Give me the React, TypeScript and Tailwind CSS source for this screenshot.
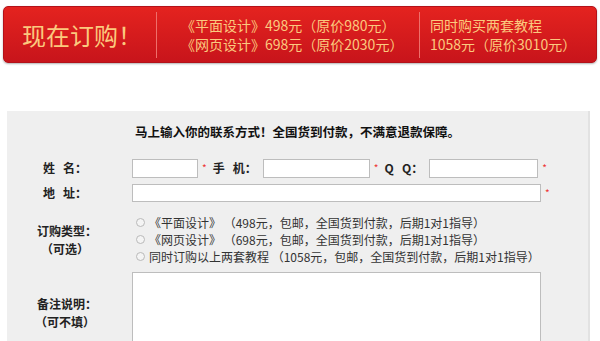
const cjk = { fontFamily: '"Noto Sans CJK SC", "Liberation Sans", sans-serif' };

function Star() {
  return <span className="ml-[4px] text-[10px] leading-none text-[#e33]">*</span>;
}

function Radio() {
  return (
    <span className="mr-[4px] inline-block h-[9px] w-[9px] rounded-full border border-[#b9b9b9] bg-[#f4f4f4]" />
  );
}

export default function App() {
  const options = [
    '《平面设计》 （498元，包邮，全国货到付款，后期1对1指导）',
    '《网页设计》 （698元，包邮，全国货到付款，后期1对1指导）',
    '同时订购以上两套教程 （1058元，包邮，全国货到付款，后期1对1指导）',
  ];

  return (
    <div className="h-[341px] w-[600px] overflow-hidden bg-white" style={cjk}>
      {/* banner */}
      <div className="ml-[3px] mt-[6px] flex h-[57px] w-[594px] items-center rounded-[5px] border border-[#b3121a] bg-gradient-to-b from-[#e4231f] to-[#c8141b] text-[#fbc97e] shadow-[0_1px_2px_rgba(0,0,0,0.3)]">
        <div className="flex h-[46px] w-[153px] items-center border-r border-[#ee6f6a] pl-[18px] text-[24px] leading-none">
          现在订购！
        </div>
        <div className="flex h-[46px] w-[263px] flex-col justify-center border-r border-[#ee6f6a] pl-[24px] text-[14px] leading-[19px]">
          <div>《平面设计》498元（原价980元）</div>
          <div>《网页设计》698元（原价2030元）</div>
        </div>
        <div className="flex flex-col justify-center pl-[10px] text-[14px] leading-[19px]">
          <div>同时购买两套教程</div>
          <div>1058元（原价3010元）</div>
        </div>
      </div>

      {/* form panel */}
      <div className="ml-[7px] mt-[48px] h-[240px] w-[583px] border-r-2 border-[#e2e2e2] bg-[#efefef] text-[12px] text-[#222]">
        <div className="pt-[13px] text-center text-[12.5px] font-bold leading-[16px] text-[#111]">
          马上输入你的联系方式！全国货到付款，不满意退款保障。
        </div>

        <div className="mt-[18px] flex h-[20px] items-center">
          <div className="w-[116px] whitespace-pre text-center font-bold">姓   名：</div>
          <input className="ml-[9px] h-[19px] w-[66px] border border-[#bdbdbd] bg-white" />
          <Star />
          <span className="ml-[6px] whitespace-pre font-bold">手   机：</span>
          <input className="ml-[6px] h-[19px] w-[107px] border border-[#bdbdbd] bg-white" />
          <Star />
          <span className="ml-[6px] whitespace-pre font-bold">Q   Q：</span>
          <input className="ml-[6px] h-[19px] w-[109px] border border-[#bdbdbd] bg-white" />
          <Star />
        </div>

        <div className="mt-[5px] flex h-[19px] items-center">
          <div className="w-[116px] whitespace-pre text-center font-bold">地   址：</div>
          <input className="ml-[9px] h-[18px] w-[409px] border border-[#bdbdbd] bg-white" />
          <Star />
        </div>

        <div className="mt-[12px] flex">
          <div className="flex w-[116px] flex-col items-center justify-center gap-[1px] text-[12px] font-bold leading-[17px]">
            <div className="pl-[4px]">订购类型：</div>
            <div>（可选）</div>
          </div>
          <div className="ml-[13px] flex flex-col text-[12px] leading-[17px] text-[#333]">
            {options.map((o) => (
              <label key={o} className="flex items-center whitespace-pre">
                <Radio />
                {o}
              </label>
            ))}
          </div>
        </div>

        <div className="mt-[7px] flex">
          <div className="flex h-[80px] w-[116px] flex-col items-center justify-center gap-[1px] text-[12px] font-bold leading-[17px]">
            <div className="pl-[4px]">备注说明：</div>
            <div>（可不填）</div>
          </div>
          <textarea className="ml-[9px] h-[80px] w-[409px] resize border border-[#bdbdbd] bg-white" />
        </div>
      </div>
    </div>
  );
}
